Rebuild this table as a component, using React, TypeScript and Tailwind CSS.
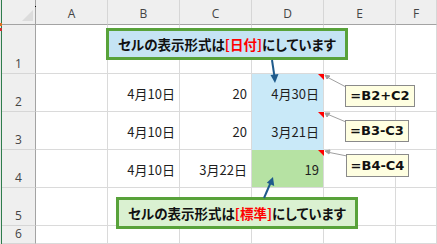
import React from 'react';

type Fill = 'blue' | 'green' | undefined;

interface Cell {
  value?: string;
  fill?: Fill;
}

const columns = ['A', 'B', 'C', 'D', 'E', 'F'];

// sheet contents, one array per row (columns A..F)
const rows: Cell[][] = [
  [{}, {}, {}, {}, {}, {}],
  [{}, { value: '4月10日' }, { value: '20' }, { value: '4月30日', fill: 'blue' }, {}, {}],
  [{}, { value: '4月10日' }, { value: '20' }, { value: '3月21日', fill: 'blue' }, {}, {}],
  [{}, { value: '4月10日' }, { value: '3月22日' }, { value: '19', fill: 'green' }, {}, {}],
  [{}, {}, {}, {}, {}, {}],
  [{}, {}, {}, {}, {}, {}],
];

const comments = [
  { text: '=B2+C2', box: 'left-[345px] top-[85px] w-[70px] h-[22px]' },
  { text: '=B3-C3', box: 'left-[345px] top-[120px] w-[64px] h-[22px]' },
  { text: '=B4-C4', box: 'left-[346px] top-[154px] w-[63px] h-[23px]' },
];

const cellClass = (cell: Cell) => {
  // blue fill covers the gridline between D2 and D3
  if (cell.fill === 'blue') return 'bg-[#c9e9f8] border-b-[#c9e9f8]';
  if (cell.fill === 'green') return 'bg-[#b6e2a3]';
  return 'bg-white';
};

const App: React.FC = () => {
  return (
    <div className="relative w-[437px] h-[244px] overflow-hidden bg-white flex font-['Noto_Sans_CJK_JP',sans-serif]">
      {/* window edge */}
      <div className="w-px bg-[#e6e6e6]" />
      <div className="w-px bg-[#2f7d4d]" />

      <div className="flex-1 grid grid-cols-[34px_72px_72px_72px_72px_72px_1fr] grid-rows-[25px_49px_38px_38px_38px_38px_1fr]">
        {/* corner */}
        <div className="relative bg-[#efefef] border-r border-b border-[#a3a3a3]">
          <svg className="absolute inset-0" width="34" height="25">
            <polygon points="20,21 31,10 31,21" fill="#dcdcdc" />
          </svg>
        </div>
        {columns.map((c) => (
          <div
            key={c}
            className="bg-[#efefef] border-r border-r-[#d6d6d6] border-b border-b-[#a3a3a3] flex items-end justify-center pb-[3px] text-[12px] leading-[14px] text-[#444] font-['Open_Sans',sans-serif]"
          >
            {c}
          </div>
        ))}

        {rows.map((row, r) => (
          <React.Fragment key={r}>
            <div className="bg-[#efefef] border-r border-r-[#a3a3a3] border-b border-b-[#d6d6d6] flex items-end justify-center pb-[2px] text-[12px] leading-[14px] text-[#444] font-['Open_Sans',sans-serif]">
              {r + 1}
            </div>
            {row.map((cell, c) => (
              <div
                key={c}
                className={`border-r border-b border-[#dadada] flex items-center justify-end pr-[4px] pt-[2px] text-[13px] text-[#1e1e1e] ${cellClass(cell)}`}
              >
                {cell.value}
              </div>
            ))}
          </React.Fragment>
        ))}
      </div>

      {/* cell format callouts */}
      <div className="absolute left-[106px] top-[28px] w-[242px] h-[32px] border-[3px] border-[#58a23a] bg-[#c5e4f4] flex items-center justify-center text-[13.5px] font-bold text-[#111] [font-feature-settings:'palt']">
        セルの表示形式は<span className="text-[#ff0000]">[日付]</span>にしています
      </div>
      <div className="absolute left-[116px] top-[197px] w-[242px] h-[32px] border-[3px] border-[#58a23a] bg-[#daf1d1] flex items-center justify-center text-[13.5px] font-bold text-[#111] [font-feature-settings:'palt']">
        セルの表示形式は<span className="text-[#ff0000]">[標準]</span>にしています
      </div>

      {/* comment leaders, indicators and arrows */}
      <svg className="absolute inset-0 pointer-events-none" width="437" height="244">
        <g stroke="#a0a0a0" strokeWidth="1" fill="#a0a0a0">
          <line x1="327" y1="77" x2="346" y2="87" />
          <polygon points="325,75 330,76 327,79" />
          <line x1="327" y1="114" x2="346" y2="122" />
          <polygon points="325,113 330,113 327,117" />
          <line x1="327" y1="152" x2="347" y2="156" />
          <polygon points="325,151 330,150 329,154" />
        </g>
        <g fill="#ff0000">
          <polygon points="318,74 324,74 324,80" />
          <polygon points="318,112 324,112 324,118" />
          <polygon points="318,150 324,150 324,156" />
        </g>
        <g stroke="#1f5b8c" strokeWidth="2" fill="#1f5b8c">
          <line x1="272" y1="60" x2="274.4" y2="76" />
          <polygon points="275,83 270.5,75 278.5,74" stroke="none" />
          <line x1="264" y1="198" x2="270.5" y2="183" />
          <polygon points="273,177 274.2,186 266.8,182.8" stroke="none" />
        </g>
      </svg>

      {comments.map((cm) => (
        <div
          key={cm.text}
          className={`absolute ${cm.box} bg-[#ffffe1] border border-[#8a8a8a] flex items-center justify-center text-[13px] font-bold text-[#111] font-['DejaVu_Sans',sans-serif]`}
        >
          {cm.text}
        </div>
      ))}

      {/* status marks on the window edge */}
      <div className="absolute left-0 top-[23px] w-[2px] h-[3px] bg-[#e07020]" />
      <div className="absolute left-0 top-[28px] w-[2px] h-[3px] bg-[#d03030]" />
      <div className="absolute left-[35px] top-[6px] w-px h-px bg-black" />
    </div>
  );
};

export default App;
